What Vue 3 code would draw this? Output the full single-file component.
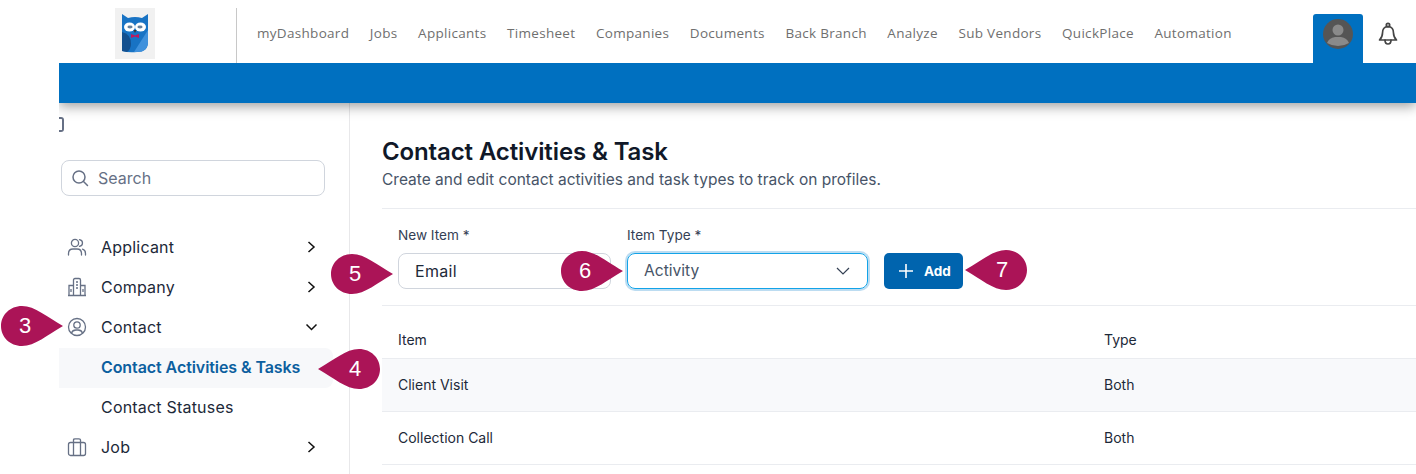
<template>
  <div class="page">
    <header class="topbar">
      <div class="brand">
        <div class="logo">
          <svg width="28" height="40" viewBox="0 0 28 40">
            <path d="M1 0 L7 4 Q14 2 21 4 L27 0 V28 Q27 38 16 38 Q8 39 1 37 Z" fill="#1873c4" />
            <path d="M13 38 L27 16 V28 Q27 38 16 38 Z" fill="#3f91dc" />
            <path d="M1 18 Q10 20 10 30 Q10 35 6 38 L1 37 Z" fill="#14508f" />
            <ellipse cx="8.5" cy="13" rx="5.5" ry="4.6" fill="#fff" />
            <ellipse cx="19.5" cy="13" rx="5.5" ry="4.6" fill="#fff" />
            <ellipse cx="9" cy="13" rx="2.6" ry="1.4" fill="#64809c" />
            <ellipse cx="19" cy="13" rx="2.6" ry="1.4" fill="#64809c" />
            <path d="M12.5 16 h3 l-1.5 3 Z" fill="#333" />
            <path d="M10 20 l4 1.5 4 -1.5 v4 l-4 -1.5 -4 1.5 Z" fill="#c2185b" />
          </svg>
        </div>
      </div>
      <nav class="menu">
        <a v-for="item in menu" :key="item">{{ item }}</a>
      </nav>
      <div class="user">
        <div class="user-tab">
          <svg width="30" height="30" viewBox="0 0 30 30">
            <circle cx="15" cy="15" r="15" fill="#555" />
            <circle cx="15" cy="11" r="5.5" fill="#8a8a8a" />
            <path d="M4 24 Q6 19 12 18 h6 Q24 19 26 24 Q21 27 15 27 Q9 27 4 24 Z" fill="#8a8a8a" />
          </svg>
        </div>
        <svg class="bell" width="22" height="24" viewBox="0 0 22 24" fill="none" stroke="#444" stroke-width="1.7" stroke-linejoin="round" stroke-linecap="round">
          <circle cx="11" cy="3" r="1.7" />
          <path d="M11 4.7 C7 4.7 5.5 7.5 5.5 11 C5.5 14.5 4.5 16 2.5 18 H19.5 C17.5 16 16.5 14.5 16.5 11 C16.5 7.5 15 4.7 11 4.7 Z" />
          <path d="M8 18 Q8 22 11 22 Q14 22 14 18" />
        </svg>
      </div>
    </header>
    <div class="bluebar"></div>

    <div class="body">
      <aside class="sidebar">
        <div class="collapse"></div>
        <div class="search">
          <svg width="18" height="18" viewBox="0 0 18 18" fill="none" stroke="#667085" stroke-width="1.5" stroke-linecap="round">
            <circle cx="8" cy="8" r="6" />
            <path d="M12.5 12.5 L16.5 16.5" />
          </svg>
          <span>Search</span>
        </div>
        <ul class="tree">
          <li class="row">
            <svg class="ico" viewBox="0 0 20 20" fill="none" stroke="#667085" stroke-width="1.3" stroke-linecap="round">
              <circle cx="8" cy="6" r="3.6" />
              <path d="M1.5 18 V16.5 Q1.5 12 6 12 H10 Q14.5 12 14.5 16.5 V18" />
              <path d="M12.5 2.6 Q15.5 3.2 15.5 6 Q15.5 8.8 12.5 9.4" />
              <path d="M15.5 12.2 Q18.5 13 18.5 16.5 V18" />
            </svg>
            <span>Applicant</span>
            <svg class="chev" viewBox="0 0 12 12"><path d="M2.5 1 L8 6 L2.5 11" /></svg>
          </li>
          <li class="row">
            <svg class="ico" viewBox="0 0 20 20" fill="none" stroke="#667085" stroke-width="1.3">
              <path d="M6.5 18.5 V3 Q6.5 1.5 8 1.5 H12 Q13.5 1.5 13.5 3 V18.5" />
              <path d="M6.5 8.5 H2 V18.5 M13.5 8.5 H18 V18.5 M1 18.5 H19" />
              <path d="M9 5 H11 M9 8 H11 M9 11 H11 M4 12 V15 M16 12 V15" />
            </svg>
            <span>Company</span>
            <svg class="chev" viewBox="0 0 12 12"><path d="M2.5 1 L8 6 L2.5 11" /></svg>
          </li>
          <li class="row">
            <svg class="ico" viewBox="0 0 20 20" fill="none" stroke="#667085" stroke-width="1.3">
              <circle cx="10" cy="10" r="8.5" />
              <circle cx="10" cy="8" r="3.2" />
              <path d="M4.5 16 Q5.5 13 9 13 H11 Q14.5 13 15.5 16" />
            </svg>
            <span>Contact</span>
            <svg class="chev down" viewBox="0 0 12 12"><path d="M1 3.5 L6 8.5 L11 3.5" /></svg>
          </li>
          <li class="row sub active"><span>Contact Activities &amp; Tasks</span></li>
          <li class="row sub"><span>Contact Statuses</span></li>
          <li class="row">
            <svg class="ico" viewBox="0 0 20 20" fill="none" stroke="#667085" stroke-width="1.3">
              <rect x="1.5" y="5.5" width="17" height="13" rx="2" />
              <path d="M6.5 5.5 V3 Q6.5 1.8 8 1.8 H12 Q13.5 1.8 13.5 3 V5.5 M6.5 5.5 V18.5 M13.5 5.5 V18.5" />
            </svg>
            <span>Job</span>
            <svg class="chev" viewBox="0 0 12 12"><path d="M2.5 1 L8 6 L2.5 11" /></svg>
          </li>
        </ul>
      </aside>

      <main class="main">
        <h1>Contact Activities &amp; Task</h1>
        <p class="lead">Create and edit contact activities and task types to track on profiles.</p>
        <form class="form" @submit.prevent>
          <div class="field">
            <label>New Item *</label>
            <div class="input first">Email</div>
          </div>
          <div class="field">
            <label>Item Type *</label>
            <div class="input select">
              <span>Activity</span>
              <svg width="14" height="8" viewBox="0 0 14 8" fill="none" stroke="#344054" stroke-width="1.2"><path d="M1 1 L7 7 L13 1" /></svg>
            </div>
          </div>
          <button class="add" type="button">
            <svg width="14" height="14" viewBox="0 0 14 14" stroke="#fff" stroke-width="1.6"><path d="M7 0 V14 M0 7 H14" /></svg>
            <span>Add</span>
          </button>
        </form>
        <div class="table">
          <div class="tr head"><span>Item</span><span>Type</span></div>
          <div v-for="(row, i) in rows" :key="row" class="tr" :class="{ odd: i === 0 }">
            <span>{{ row }}</span><span>Both</span>
          </div>
        </div>
      </main>
    </div>

    <!-- numbered callouts sit on top of the screenshot -->
    <div v-for="c in callouts" :key="c.n" class="pin" :class="c.side" :style="{ left: c.x + 'px', top: c.y + 'px' }">
      <svg width="62" height="40" viewBox="0 0 62 40">
        <path d="M21 0 C34 0 46 11 62 20 C46 29 34 40 21 40 C9 40 0 31 0 20 C0 9 9 0 21 0 Z" fill="#ab1457" />
      </svg>
      <span>{{ c.n }}</span>
    </div>
  </div>
</template>

<script setup>
const menu = ['myDashboard', 'Jobs', 'Applicants', 'Timesheet', 'Companies', 'Documents', 'Back Branch', 'Analyze', 'Sub Vendors', 'QuickPlace', 'Automation']
const rows = ['Client Visit', 'Collection Call']
const callouts = [
  { n: 3, x: 1, y: 306, side: 'right' },
  { n: 4, x: 318, y: 349, side: 'left' },
  { n: 5, x: 331, y: 254, side: 'right' },
  { n: 6, x: 561, y: 251, side: 'right' },
  { n: 7, x: 965, y: 250, side: 'left' },
]
</script>

<style scoped>
.page {
  position: relative;
  width: 1416px;
  height: 474px;
  overflow: hidden;
  background: #fff;
  font-family: Inter, "Liberation Sans", sans-serif;
  color: #101828;
}

.topbar {
  display: flex;
  height: 63px;
}

.brand {
  width: 236px;
  margin-top: 8px;
  border-right: 1px solid #c8c8c8;
  box-sizing: content-box;
}

.logo {
  width: 40px;
  height: 51px;
  margin-left: 115px;
  background: #f1f1f1;
  display: flex;
  align-items: center;
  justify-content: center;
}

.menu {
  display: flex;
  align-items: center;
  gap: 20.6px;
  margin-left: 20px;
  padding-top: 3px;
  font-family: "Open Sans", sans-serif;
  font-size: 13.5px;
  letter-spacing: 0.3px;
  color: #6f6f6f;
  white-space: nowrap;
}

.user {
  margin-left: auto;
  display: flex;
  align-items: flex-start;
  padding-right: 17px;
}

.user-tab {
  width: 50px;
  height: 49px;
  margin-top: 14px;
  background: #0070c0;
  border-radius: 3px 3px 0 0;
  display: flex;
  justify-content: center;
  padding-top: 5px;
  box-sizing: border-box;
}

.bell {
  margin: 22px 0 0 14px;
}

.bluebar {
  height: 40px;
  margin-left: 59px;
  background: #0070c0;
  box-shadow: 0 3px 12px rgba(0, 0, 0, 0.4);
  clip-path: inset(0 0 -24px 0);
  position: relative;
}

.body {
  display: flex;
  margin-left: 59px;
}

.sidebar {
  width: 291px;
  height: 371px;
  border-right: 1px solid #e8e8ea;
  box-sizing: border-box;
  flex-shrink: 0;
}

.collapse {
  width: 5px;
  height: 15px;
  margin-top: 14px;
  border: 2px solid #667085;
  border-left: 0;
  border-radius: 0 3px 3px 0;
  box-sizing: border-box;
}

.search {
  display: flex;
  align-items: center;
  gap: 9px;
  width: 264px;
  height: 36px;
  margin: 28px 0 0 2px;
  padding-left: 9px;
  border: 1px solid #d0d5dd;
  border-radius: 8px;
  box-sizing: border-box;
  font-size: 16px;
  color: #667085;
}

.tree {
  list-style: none;
  margin: 32px 0 0;
  padding: 0;
}

.row {
  display: flex;
  align-items: center;
  height: 40px;
  width: 274px;
  padding-left: 8px;
  padding-bottom: 2px;
  box-sizing: border-box;
  font-size: 16px;
  letter-spacing: 0.2px;
  color: #1d2939;
}

.ico {
  width: 20px;
  height: 20px;
  margin-right: 14px;
}

.chev {
  width: 12px;
  height: 12px;
  margin-left: auto;
  margin-right: 15px;
  fill: none;
  stroke: #111;
  stroke-width: 1.5;
}

.chev.down {
  margin-right: 15px;
  width: 13px;
}

.sub {
  padding-left: 42px;
  border-radius: 0 8px 8px 0;
}

.active {
  background: #f7f8fa;
  color: #0c5f9f;
  font-weight: 600;
  letter-spacing: -0.08px;
}

.main {
  flex: 1;
  padding: 35px 0 0 32px;
}

h1 {
  margin: 0;
  font-size: 24px;
  line-height: 28px;
  font-weight: 600;
  letter-spacing: -0.12px;
  color: #101828;
}

.lead {
  margin: 4px 0 0;
  font-size: 15.5px;
  line-height: 20px;
  color: #475467;
}

.form {
  display: flex;
  align-items: flex-end;
  gap: 16px;
  margin-top: 18px;
  padding: 16px;
  height: 98px;
  box-sizing: border-box;
  border-top: 1px solid #eaecf0;
  border-bottom: 1px solid #eaecf0;
}

.field label {
  display: block;
  margin-bottom: 9px;
  font-size: 13.6px;
  line-height: 18px;
  color: #344054;
}

.input {
  display: flex;
  align-items: center;
  width: 213px;
  height: 36px;
  padding-left: 16px;
  border: 1px solid #d0d5dd;
  border-radius: 8px;
  box-sizing: border-box;
  font-size: 16px;
  letter-spacing: 0.3px;
  color: #1d2939;
}

.select {
  width: 241px;
  justify-content: space-between;
  padding-right: 17px;
  border-color: #12a3e8;
  box-shadow: 0 0 0 2px #bcdcf1;
  font-size: 15.6px;
  letter-spacing: 0;
  color: #475467;
}

.select span {
  margin-bottom: 2px;
}

.add {
  display: flex;
  align-items: center;
  gap: 11px;
  height: 36px;
  width: 79px;
  padding: 0 0 0 15px;
  border: 0;
  border-radius: 5px;
  background: #0064ae;
  color: #fff;
  font-family: inherit;
  font-size: 13.5px;
  font-weight: 700;
}

.tr {
  display: flex;
  align-items: center;
  height: 53px;
  padding: 0 0 2px 16px;
  box-sizing: border-box;
  border-bottom: 1px solid #eaecf0;
  font-size: 14px;
  color: #1d2939;
}

.tr span:first-child {
  width: 706px;
}

.head {
  align-items: flex-end;
  padding-bottom: 10px;
  color: #1d2939;
}

.odd {
  background: #f8f9fb;
}

.pin {
  position: absolute;
  width: 62px;
  height: 40px;
}

.pin span {
  position: absolute;
  top: 0;
  left: 0;
  width: 48px;
  line-height: 40px;
  text-align: center;
  color: #fff;
  font-family: "Liberation Sans", sans-serif;
  font-size: 22px;
}

.pin svg {
  display: block;
}

.pin.left svg {
  transform: scaleX(-1);
}

.pin.left span {
  left: 13px;
}
</style>
